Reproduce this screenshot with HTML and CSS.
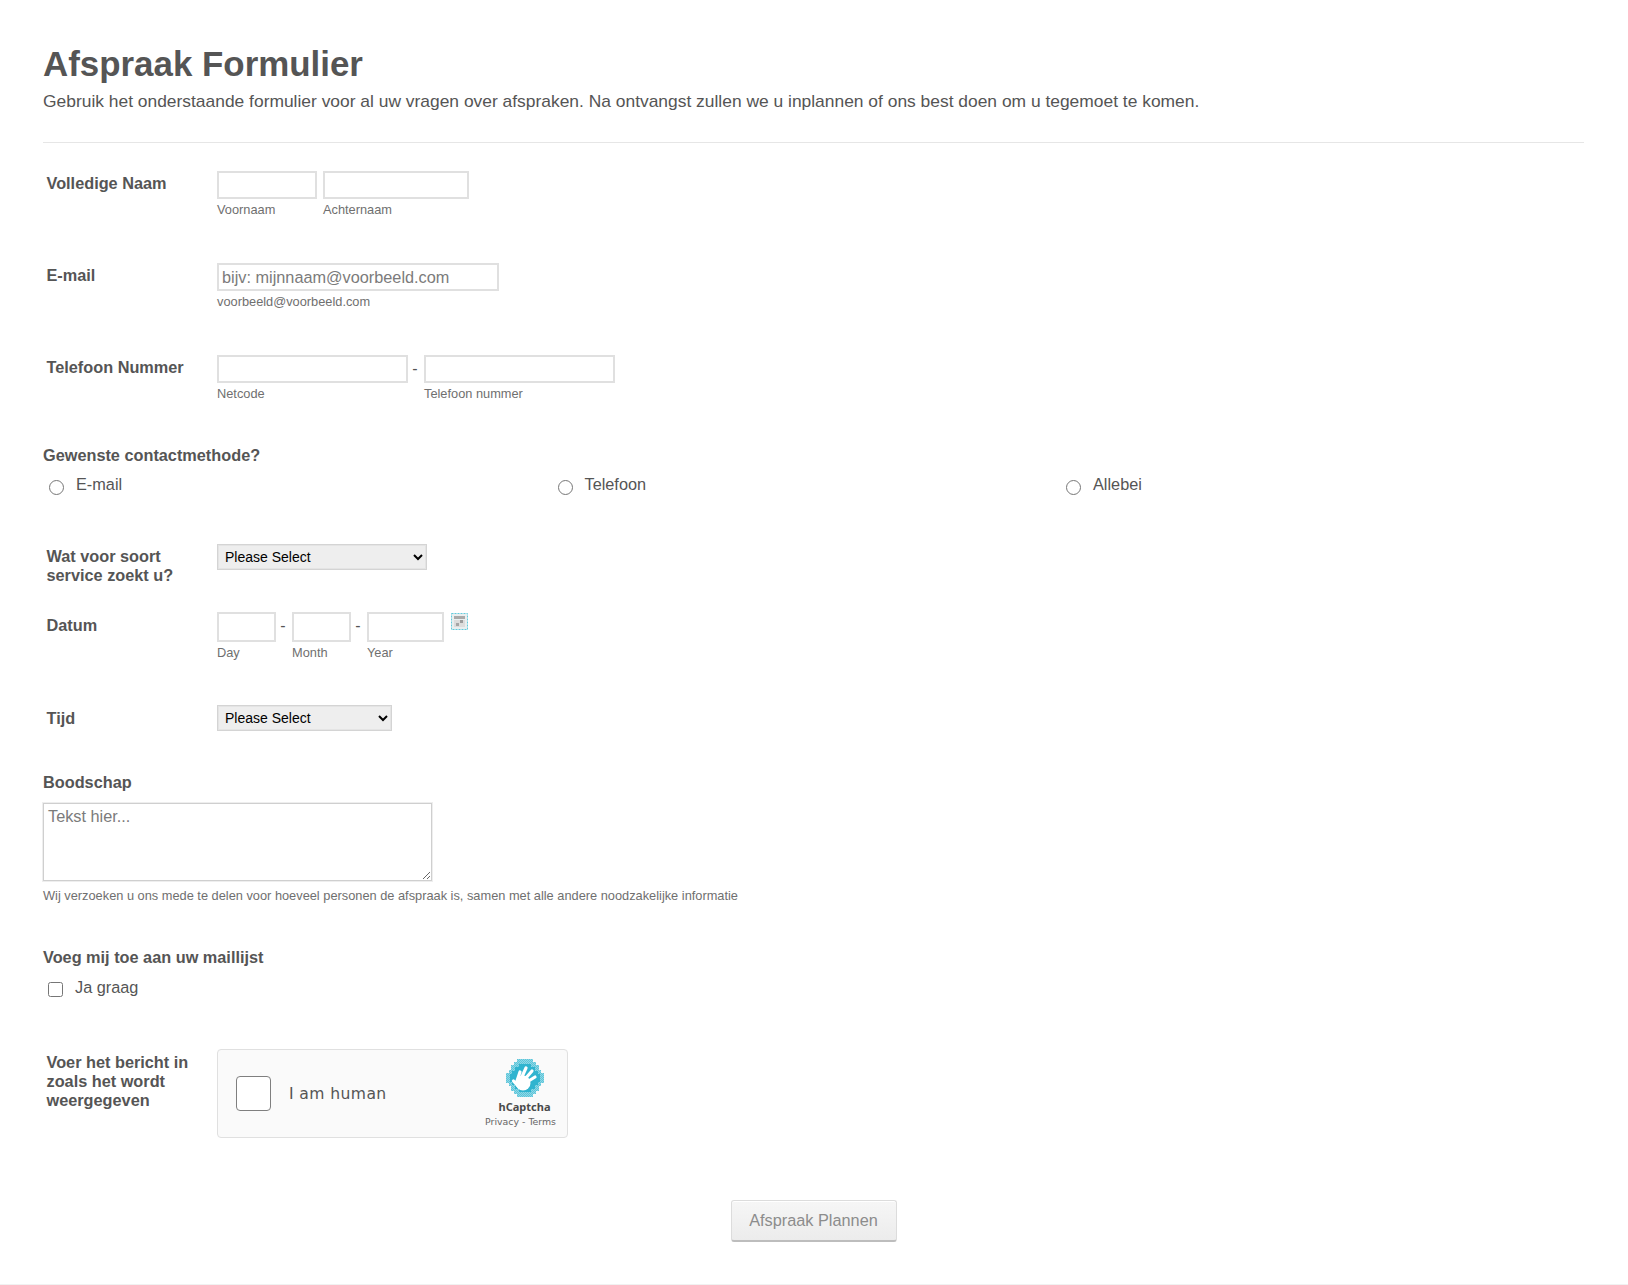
FILE: index.html
```html
<!DOCTYPE html>
<html lang="nl">
<head>
<meta charset="utf-8">
<title>Afspraak Formulier</title>
<link rel="stylesheet" href="styles.css">
</head>
<body>
<form class="form">
  <header class="head">
    <h1 class="title">Afspraak Formulier</h1>
    <p class="subtitle">Gebruik het onderstaande formulier voor al uw vragen over afspraken. Na ontvangst zullen we u inplannen of ons best doen om u tegemoet te komen.</p>
  </header>

  <div class="row row-name">
    <label class="label">Volledige Naam</label>
    <div class="fields">
      <div class="sub"><input class="input w-first" type="text"><span class="hint">Voornaam</span></div>
      <div class="sub"><input class="input w-last" type="text"><span class="hint">Achternaam</span></div>
    </div>
  </div>

  <div class="row row-email">
    <label class="label">E-mail</label>
    <div class="fields">
      <div class="sub"><input class="input w-email" type="text" placeholder="bijv: mijnnaam@voorbeeld.com"><span class="hint">voorbeeld@voorbeeld.com</span></div>
    </div>
  </div>

  <div class="row row-phone">
    <label class="label">Telefoon Nummer</label>
    <div class="fields">
      <div class="sub"><input class="input w-phone" type="text"><span class="hint">Netcode</span></div>
      <span class="dash">-</span>
      <div class="sub"><input class="input w-phone" type="text"><span class="hint">Telefoon nummer</span></div>
    </div>
  </div>

  <div class="block block-contact">
    <div class="label-top">Gewenste contactmethode?</div>
    <div class="radios">
      <label class="choice"><input class="radio" type="radio" name="m"><span>E-mail</span></label>
      <label class="choice"><input class="radio" type="radio" name="m"><span>Telefoon</span></label>
      <label class="choice"><input class="radio" type="radio" name="m"><span>Allebei</span></label>
    </div>
  </div>

  <div class="row row-service">
    <label class="label">Wat voor soort<br>service zoekt u?</label>
    <div class="fields"><select class="select w-sel1"><option>Please Select</option></select></div>
  </div>

  <div class="row row-date">
    <label class="label label-low">Datum</label>
    <div class="fields">
      <div class="sub"><input class="input date w-dm" type="text"><span class="hint">Day</span></div>
      <span class="dash">-</span>
      <div class="sub"><input class="input date w-dm" type="text"><span class="hint">Month</span></div>
      <span class="dash">-</span>
      <div class="sub"><input class="input date w-year" type="text"><span class="hint">Year</span></div>
      <svg class="cal" viewBox="0 0 17 17" aria-hidden="true">
        <rect x="0.5" y="0.5" width="16" height="16" fill="#e9eeef" stroke="#62cbdc" stroke-dasharray="2 1"/>
        <rect x="3" y="3" width="11" height="3" fill="#a9a9a9"/>
        <rect x="3" y="7" width="11" height="7" fill="#dcdcdc"/>
        <rect x="9" y="7" width="3" height="3" fill="#9a9a9a"/>
        <rect x="5" y="10" width="3" height="3" fill="#a5a5a5"/>
      </svg>
    </div>
  </div>

  <div class="row row-time">
    <label class="label label-low">Tijd</label>
    <div class="fields"><select class="select w-sel2"><option>Please Select</option></select></div>
  </div>

  <div class="block block-msg">
    <div class="label-top">Boodschap</div>
    <textarea class="area" placeholder="Tekst hier..."></textarea>
    <div class="hint hint-msg">Wij verzoeken u ons mede te delen voor hoeveel personen de afspraak is, samen met alle andere noodzakelijke informatie</div>
  </div>

  <div class="block block-list">
    <div class="label-top">Voeg mij toe aan uw maillijst</div>
    <label class="choice choice-check"><input class="check" type="checkbox"><span>Ja graag</span></label>
  </div>

  <div class="row row-captcha">
    <label class="label label-low">Voer het bericht in<br>zoals het wordt<br>weergegeven</label>
    <div class="captcha">
      <span class="cap-box"></span>
      <span class="cap-text">I am human</span>
      <div class="cap-brand">
        <svg class="cap-logo" viewBox="0 0 38 38" aria-hidden="true">
          <defs>
            <pattern id="dither" width="2" height="2" patternUnits="userSpaceOnUse">
              <rect width="2" height="2" fill="#5cc4d9"/>
              <rect width="1" height="1" fill="#8fd8e6"/>
              <rect x="1" y="1" width="1" height="1" fill="#8fd8e6"/>
            </pattern>
          </defs>
          <path fill="url(#dither)" d="M11 0h16v3h3v3h3v5h2v3h3v10h-3v3h-2v5h-3v3h-3v3H11v-3H8v-3H5v-5H3v-3H0V14h3v-3h2V6h3V3h3z"/>
          <path fill="#30b4cf" d="M13 5h12v3h4v4h3v3h2v8h-2v3h-3v4h-4v3H13v-3H9v-4H6v-3H4v-8h2v-3h3V8h4z"/>
          <g fill="#fff" stroke="#fff" stroke-linecap="round">
            <circle cx="17" cy="24" r="7.500" stroke="none"/>
            <path fill="none" stroke-width="3.200" d="M11 22 L14 13 M15 20 L20 9 M19 20 L26 12 M21 23 L29 18 M12 27 L7.500 22"/>
          </g>
        </svg>
        <span class="cap-name">hCaptcha</span>
        <span class="cap-links">Privacy - Terms</span>
      </div>
    </div>
  </div>

  <div class="actions"><button class="submit" type="button">Afspraak Plannen</button></div>
</form>
</body>
</html>
```
FILE: styles.css
```css
* { box-sizing: border-box; }
html, body { margin: 0; padding: 0; background: #fff; }
body { font-family: "Liberation Sans", Arial, sans-serif; color: #555; height: 1285px; overflow: hidden; }
.form { height: 1285px; padding: 0 44px 0 43px; border-bottom: 1px solid #f1f1f1; }

.head { border-bottom: 1px solid #e6e6e6; height: 143px; padding-top: 42px; }
.title { margin: 0; font-size: 34.900px; line-height: 44px; font-weight: bold; color: #555; }
.subtitle { margin: 4px 0 0; font-size: 17.420px; line-height: 22px; color: #555; }

.row { display: flex; padding-left: 3.500px; }
.label { width: 170.500px; flex: none; font-size: 16.300px; line-height: 19px; font-weight: bold; color: #555; padding-top: 3px; }
.label-low { padding-top: 4px; }
.fields { display: flex; align-items: flex-start; }
.sub { display: flex; flex-direction: column; margin-right: 6px; }
.hint { font-size: 12.800px; line-height: 15px; color: #6f6f6f; margin-top: 3px; }
.dash { font-size: 16px; line-height: 28px; color: #555; width: 10px; margin: 0 4px 0 -4px; text-align: center; }

.input { height: 28px; border: 2px solid #e0e0e0; background: #fff; padding: 0 3px; font: 16.300px "Liberation Sans", Arial, sans-serif; color: #555; border-radius: 0; outline: none; }
.input::placeholder { color: #7b7b7b; opacity: 1; }
.date { height: 30px; }
.w-first { width: 100px; }
.w-last { width: 146px; }
.w-email { width: 282px; }
.w-phone { width: 191px; }
.w-dm { width: 59px; }
.w-year { width: 77px; }

.cal { width: 17px; height: 17px; margin: 1px 0 0 1px; }

.select { height: 26px; border: 1px solid #d4d4d4; background: #eee; font: 14px "Liberation Sans", Arial, sans-serif; color: #000; padding: 0 0 0 3px; border-radius: 0; box-shadow: 0 0 0 1px #e4e4e4 inset; }
.w-sel1 { width: 210px; }
.w-sel2 { width: 175px; }

.block { display: block; }
.label-top { font-size: 16.300px; line-height: 19px; font-weight: bold; color: #555; }
.radios { display: grid; grid-template-columns: repeat(3, 508.500px); margin-top: 9px; padding-left: 6px; }
.choice { display: flex; align-items: flex-start; font-size: 16.300px; line-height: 20px; color: #555; }
.radio { appearance: auto; width: 15px; height: 15px; margin: 6px 12px 0 0; flex: none; }
.check { width: 15px; height: 15px; margin: 5px 12px 0 0; flex: none; }
.choice-check { margin-top: 10px; padding-left: 5px; }

.row-name { margin-top: 28px; }
.row-email { margin-top: 46px; }
.row-phone { margin-top: 46px; }
.block-contact { margin-top: 45px; }
.row-service { margin-top: 49px; }
.row-date { margin-top: 27px; }
.row-time { margin-top: 45px; }
.block-msg { margin-top: 42px; }
.block-list { margin-top: 45px; }
.row-captcha { margin-top: 52px; }

.area { display: block; width: 389px; height: 78px; margin-top: 11px; border: 1px solid #cfcfcf; box-shadow: 0 0 0 1px #eee; border-radius: 0; padding: 3px 4px; font: 16.300px "Liberation Sans", Arial, sans-serif; color: #555; outline: none; }
.area::placeholder { color: #7b7b7b; opacity: 1; }
.hint-msg { margin-top: 7px; }

.captcha { width: 351px; height: 89px; display: flex; align-items: center; background: #fafafa; border: 1px solid #e0e0e0; border-radius: 4px; padding: 0 11px 0 18px; font-family: "DejaVu Sans", sans-serif; }
.cap-box { width: 35px; height: 35px; background: #fff; border: 1px solid #7f7f7f; border-radius: 4px; flex: none; }
.cap-text { margin-left: 18px; font-size: 15.600px; letter-spacing: 0.400px; color: #555; }
.cap-brand { margin-left: auto; padding-top: 1px; display: flex; flex-direction: column; align-items: center; }
.cap-logo { width: 38px; height: 38px; margin-left: 8px; }
.cap-name { font-family: "Noto Sans", sans-serif; font-size: 11px; font-weight: bold; line-height: 14px; color: #4a4a4a; margin: 3px 0 0 8px; }
.cap-links { font-size: 9.400px; line-height: 14px; color: #666; margin-top: 1px; }

.actions { display: flex; justify-content: center; margin-top: 62px; }
.submit { width: 166px; height: 42px; font: 16.300px "Liberation Sans", Arial, sans-serif; color: #8c8c8c; background: linear-gradient(#f6f6f6, #ececec); border: 1px solid #dcdcdc; border-bottom: 2px solid #bdbdbd; border-radius: 3px; box-shadow: inset 0 1px 0 #fff; padding: 0; }
```
